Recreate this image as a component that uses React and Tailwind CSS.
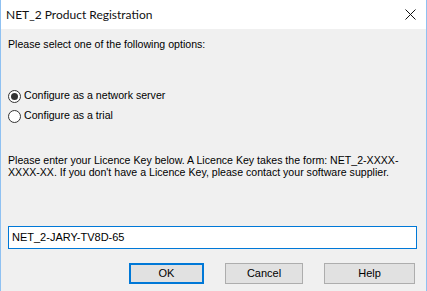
import React, { useState } from 'react';

const Radio = ({ checked, label, onClick }) => (
  <div className="flex items-center h-[20px] cursor-default" onClick={onClick}>
    <span className="w-[13px] h-[13px] rounded-full border border-[#333] bg-white flex items-center justify-center ml-[6px]">
      {checked && <span className="w-[7px] h-[7px] rounded-full bg-[#333]" />}
    </span>
    <span className="ml-[3px]">{label}</span>
  </div>
);

const Button = ({ children, primary, className }) => (
  <button
    className={`h-[21px] bg-[#e1e1e1] text-[11px] leading-none ${
      primary ? 'border-2 border-[#0078d7]' : 'border border-[#adadad]'
    } ${className}`}
  >
    {children}
  </button>
);

export default function App() {
  const [mode, setMode] = useState('server');

  return (
    <div className="w-[427px] h-[291px] bg-[#f0f0f0] border-x border-[#8fc1f2] overflow-hidden text-[10.6px] text-black font-['Liberation_Sans',Arial,sans-serif]">
      {/* title bar */}
      <div className="h-[29px] bg-white flex items-center justify-between">
        <span className="ml-[5px] text-[12px] font-['Lato',sans-serif] text-[#111]">NET_2 Product Registration</span>
        <svg className="w-[11px] h-[11px] mr-[10px]" viewBox="0 0 11 11" fill="none" stroke="#111" strokeWidth="1">
          <path d="M0.5 0.5 L10.5 10.5 M10.5 0.5 L0.5 10.5" />
        </svg>
      </div>

      <div className="px-[7px]">
        <p className="mt-[9px] leading-[13px]">Please select one of the following options:</p>

        <div className="mt-[35px] -ml-[6px]">
          <Radio checked={mode === 'server'} label="Configure as a network server" onClick={() => setMode('server')} />
          <Radio checked={mode === 'trial'} label="Configure as a trial" onClick={() => setMode('trial')} />
        </div>

        <p className="mt-[28px] leading-[12px] whitespace-nowrap">
          Please enter your Licence Key below. A Licence Key takes the form: NET_2-XXXX-
          <br />
          XXXX-XX. If you don't have a Licence Key, please contact your software supplier.
        </p>

        <div className="mt-[48px] w-[409px] h-[23px] bg-white border border-[#0078d7] flex items-center pl-[3px] text-[11px]">
          NET_2-JARY-TV8D-65
        </div>

        <div className="mt-[14px] flex">
          <Button primary className="ml-[121px] w-[75px]">OK</Button>
          <Button className="ml-[21px] w-[78px]">Cancel</Button>
          <Button className="ml-[21px] w-[91px]">Help</Button>
        </div>
      </div>
    </div>
  );
}
